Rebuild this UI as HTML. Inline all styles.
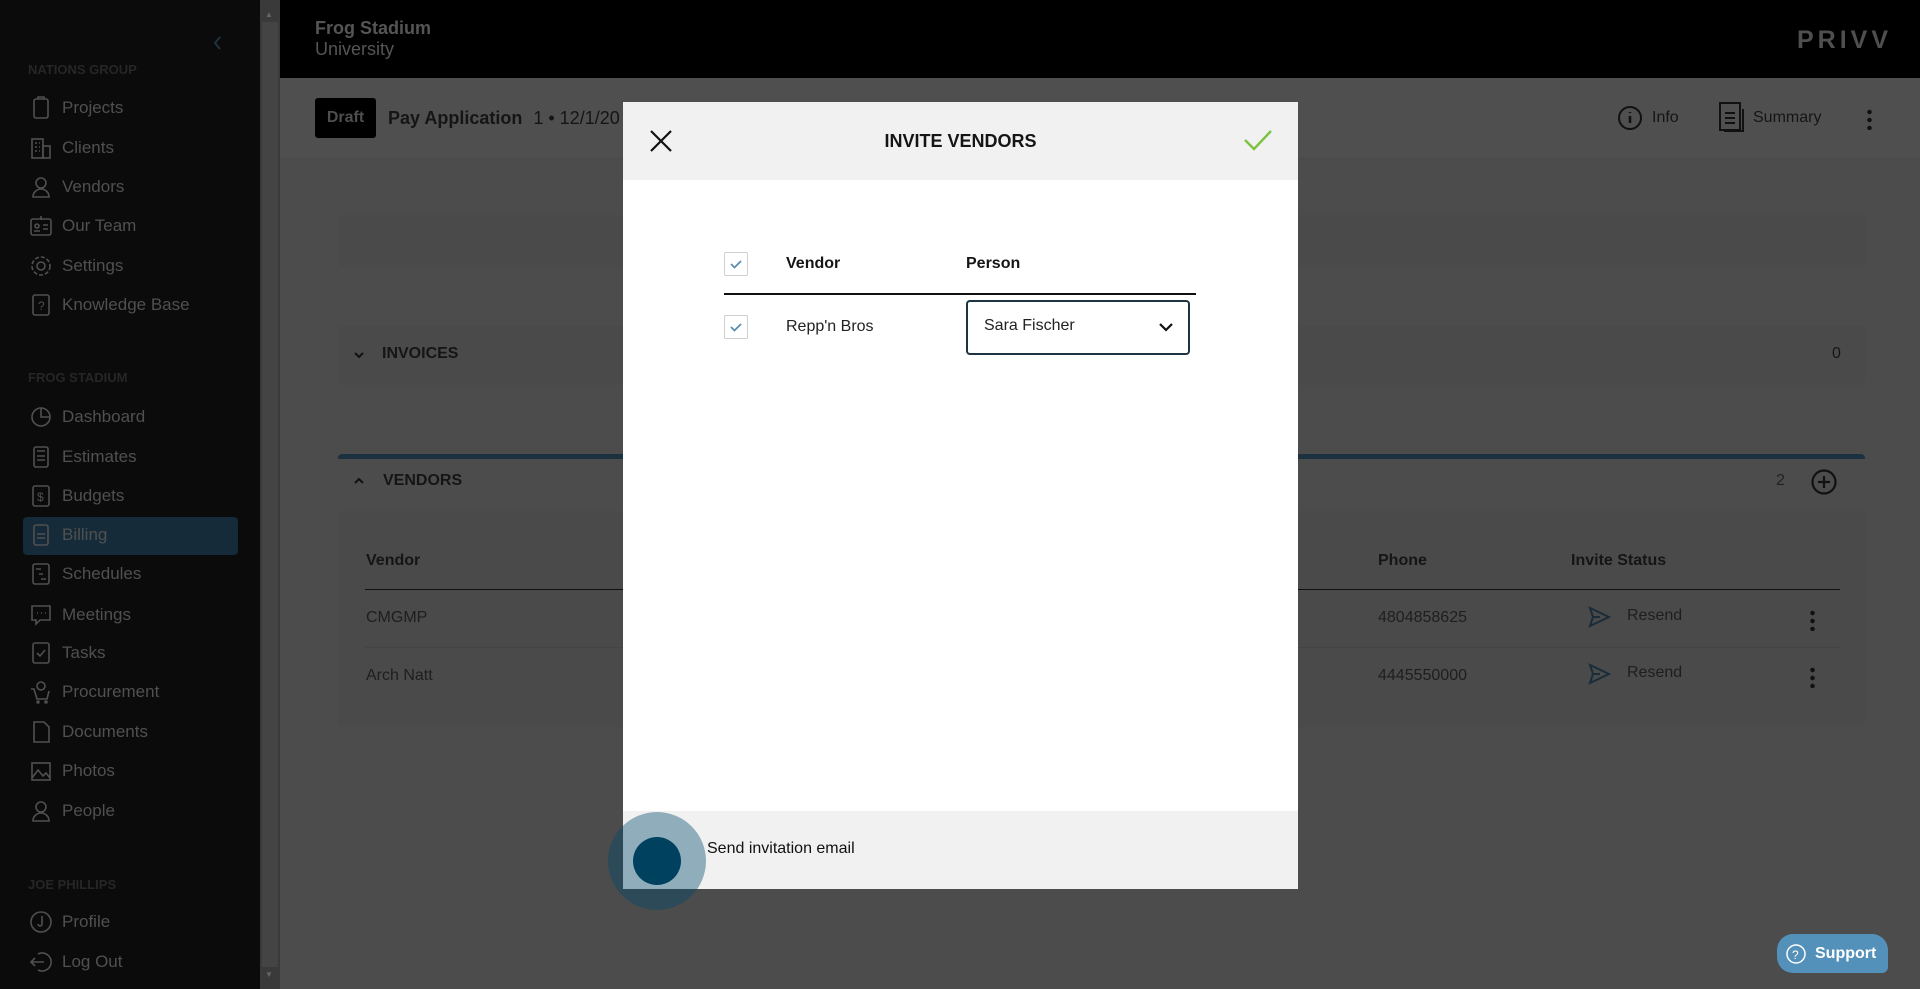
<!DOCTYPE html>
<html><head><meta charset="utf-8"><style>
*{box-sizing:border-box;margin:0;padding:0}
body{width:1920px;height:989px;overflow:hidden;position:relative;background:#4c4c4c;font-family:"Liberation Sans",sans-serif;color:#151515}
.abs{position:absolute}
#side{left:0;top:0;width:260px;height:989px;background:#0b0b0b}
#scroll{left:260px;top:0;width:20px;height:989px;background:#3a3a3a}
.sec{position:absolute;left:28px;font-size:13px;color:#262626;font-weight:bold}
.it{position:absolute;left:28px;height:30px;display:flex;align-items:center;font-size:17px;color:#505050}
.it svg{width:26px;height:26px;margin-right:8px;stroke:#505050;fill:none;stroke-width:1.6}
#top{left:280px;top:0;width:1640px;height:78px;background:#000}
#bar{left:280px;top:78px;width:1640px;height:79px;background:#4f4f4f}
.card{position:absolute;left:338px;width:1527px;background:#4a4a4a;border-radius:4px}
.txt{position:absolute;white-space:nowrap}
</style></head><body>
<div id="side" class="abs"></div>
<div id="scroll" class="abs"><div class="abs" style="left:2px;top:22px;width:16px;height:945px;background:#444"></div>
<div class="abs" style="left:5px;top:10px;font-size:8px;color:#666">▲</div><div class="abs" style="left:5px;top:970px;font-size:8px;color:#666">▼</div></div>
<svg class="abs" style="left:210px;top:34px" width="16" height="18"><path d="M10 3 L5 9 L10 15" stroke="#1e3442" stroke-width="2" fill="none"/></svg>
<div class="sec" style="top:62px">NATIONS GROUP</div>
<div class="it" style="top:93px"><svg viewBox="0 0 26 26"><rect x="6" y="4" width="14" height="19" rx="2"/><path d="M10 4v-2h6v2"/></svg>Projects</div>
<div class="it" style="top:133px"><svg viewBox="0 0 26 26"><rect x="4" y="4" width="11" height="19"/><rect x="15" y="11" width="7" height="12"/><path d="M7 8h2M11 8h1M7 12h2M11 12h1M7 16h2M11 16h1"/></svg>Clients</div>
<div class="it" style="top:172px"><svg viewBox="0 0 26 26"><circle cx="13" cy="9" r="5"/><path d="M5 23c0-5 4-8 8-8s8 3 8 8z"/></svg>Vendors</div>
<div class="it" style="top:211px"><svg viewBox="0 0 26 26"><rect x="3" y="6" width="20" height="16" rx="2"/><circle cx="9" cy="13" r="2"/><path d="M6 18h6M15 12h5M15 16h5M13 3v4"/></svg>Our Team</div>
<div class="it" style="top:251px"><svg viewBox="0 0 26 26"><circle cx="13" cy="13" r="4"/><circle cx="13" cy="13" r="9" stroke-dasharray="4 2"/></svg>Settings</div>
<div class="it" style="top:290px"><svg viewBox="0 0 26 26"><rect x="5" y="3" width="16" height="20" rx="2"/><text x="10" y="18" font-size="12" fill="#505050" stroke="none">?</text></svg>Knowledge Base</div>
<div class="sec" style="top:370px">FROG STADIUM</div>
<div class="it" style="top:402px"><svg viewBox="0 0 26 26"><circle cx="13" cy="13" r="9"/><path d="M13 4v9h9"/></svg>Dashboard</div>
<div class="it" style="top:442px"><svg viewBox="0 0 26 26"><rect x="6" y="3" width="14" height="20" rx="2"/><path d="M9 7h8M9 12h8M9 16h8"/></svg>Estimates</div>
<div class="it" style="top:481px"><svg viewBox="0 0 26 26"><rect x="5" y="3" width="16" height="20" rx="2"/><text x="9" y="18" font-size="12" fill="#505050" stroke="none">$</text></svg>Budgets</div>
<div class="abs" style="left:23px;top:517px;width:215px;height:38px;background:#152b39;border-radius:4px"></div>
<div class="it" style="top:520px"><svg viewBox="0 0 26 26"><rect x="6" y="3" width="14" height="20" rx="2"/><path d="M9 12h8M9 16h8"/></svg>Billing</div>
<div class="it" style="top:559px"><svg viewBox="0 0 26 26"><rect x="5" y="3" width="16" height="20" rx="2"/><path d="M8 8h5M11 13h4M13 18h5"/></svg>Schedules</div>
<div class="it" style="top:600px"><svg viewBox="0 0 26 26"><path d="M4 4h18v14H12l-4 4v-4H4z"/><path d="M9 11h1M13 11h1M17 11h1"/></svg>Meetings</div>
<div class="it" style="top:638px"><svg viewBox="0 0 26 26"><rect x="5" y="3" width="16" height="20" rx="2"/><path d="M9 13l3 3 5-6"/></svg>Tasks</div>
<div class="it" style="top:677px"><svg viewBox="0 0 26 26"><path d="M3 10h3l3 10h10l2-8"/><circle cx="13" cy="7" r="4"/><circle cx="10" cy="23" r="1"/><circle cx="18" cy="23" r="1"/></svg>Procurement</div>
<div class="it" style="top:717px"><svg viewBox="0 0 26 26"><path d="M6 3h10l5 5v15H6z"/></svg>Documents</div>
<div class="it" style="top:756px"><svg viewBox="0 0 26 26"><rect x="4" y="5" width="18" height="17"/><path d="M4 20l6-8 5 6 3-3 4 5"/></svg>Photos</div>
<div class="it" style="top:796px"><svg viewBox="0 0 26 26"><circle cx="13" cy="9" r="5"/><path d="M5 23c0-5 4-8 8-8s8 3 8 8z"/></svg>People</div>
<div class="sec" style="top:877px">JOE PHILLIPS</div>
<div class="it" style="top:907px"><svg viewBox="0 0 26 26"><circle cx="13" cy="13" r="10"/><path d="M14 7v8a2 2 0 0 1-4 0"/></svg>Profile</div>
<div class="it" style="top:947px"><svg viewBox="0 0 26 26"><path d="M10 5a9 9 0 1 1 0 16"/><path d="M16 13H3M7 9l-4 4 4 4"/></svg>Log Out</div>

<div id="top" class="abs"></div>
<div class="txt" style="left:315px;top:18px;font-size:18px;font-weight:bold;color:#555">Frog Stadium</div>
<div class="txt" style="left:315px;top:39px;font-size:18px;color:#555">University</div>
<div class="txt" style="left:1797px;top:26px;font-size:25px;font-weight:bold;color:#4f4f4f;letter-spacing:4px">PRIVV</div>
<div id="bar" class="abs"></div>
<div class="abs" style="left:315px;top:98px;width:61px;height:40px;background:#000;border-radius:3px;color:#4e4e4e;font-weight:bold;font-size:16px;line-height:40px;text-align:center">Draft</div>
<div class="txt" style="left:388px;top:108px;font-size:18px;font-weight:bold">Pay Application <span style="font-weight:normal;margin-left:6px">1 • 12/1/20</span></div>
<svg class="abs" style="left:1617px;top:105px" width="26" height="26"><circle cx="13" cy="13" r="11" stroke="#111" stroke-width="2" fill="none"/><path d="M13 11v7M13 7v1" stroke="#111" stroke-width="2.5"/></svg>
<div class="txt" style="left:1652px;top:109px;font-size:16px">Info</div>
<svg class="abs" style="left:1717px;top:101px" width="30" height="36"><rect x="3" y="2" width="20" height="27" stroke="#111" stroke-width="2" fill="none"/><path d="M7 30h19V8M8 12h10M8 17h10M8 22h10" stroke="#111" stroke-width="2" fill="none"/></svg>
<div class="txt" style="left:1753px;top:109px;font-size:16px">Summary</div>
<div class="abs" style="left:1867px;top:108px;width:5px;height:22px;background:radial-gradient(circle,#111 2px,transparent 2.5px) 0 0/5px 8px"></div>

<div class="card" style="top:215px;height:52px"></div>
<div class="card" style="top:326px;height:59px"></div>
<svg class="abs" style="left:352px;top:348px" width="14" height="14"><path d="M3 5l4 4 4-4" stroke="#111" stroke-width="2" fill="none"/></svg>
<div class="txt" style="left:382px;top:345px;font-size:16px;font-weight:bold">INVOICES</div>
<div class="txt" style="left:1832px;top:345px;font-size:16px">0</div>
<div class="card" style="top:454px;height:273px;border-top:5px solid #1b3140"></div>
<div class="abs" style="left:338px;top:459px;width:1527px;height:52px;background:#4c4c4c"></div>
<svg class="abs" style="left:352px;top:474px" width="14" height="14"><path d="M3 9l4-4 4 4" stroke="#111" stroke-width="2" fill="none"/></svg>
<div class="txt" style="left:383px;top:472px;font-size:16px;font-weight:bold">VENDORS</div>
<div class="txt" style="left:1776px;top:472px;font-size:16px;color:#222">2</div>
<svg class="abs" style="left:1810px;top:468px" width="28" height="28"><circle cx="14" cy="14" r="11.5" stroke="#111" stroke-width="2.2" fill="none"/><path d="M14 8v12M8 14h12" stroke="#111" stroke-width="2.2"/></svg>
<div class="txt" style="left:366px;top:552px;font-size:16px;font-weight:bold">Vendor</div>
<div class="txt" style="left:1378px;top:552px;font-size:16px;font-weight:bold">Phone</div>
<div class="txt" style="left:1571px;top:552px;font-size:16px;font-weight:bold">Invite Status</div>
<div class="abs" style="left:365px;top:589px;width:1475px;height:1px;background:#111"></div>
<div class="abs" style="left:365px;top:647px;width:1475px;height:1px;background:#444"></div>
<div class="txt" style="left:366px;top:609px;font-size:16px;color:#1e1e1e">CMGMP</div>
<div class="txt" style="left:366px;top:667px;font-size:16px;color:#1e1e1e">Arch Natt</div>
<div class="txt" style="left:1378px;top:609px;font-size:16px;color:#1e1e1e">4804858625</div>
<div class="txt" style="left:1378px;top:667px;font-size:16px;color:#1e1e1e">4445550000</div>
<svg class="abs" style="left:1587px;top:605px" width="24" height="24"><path d="M3 3l19 9-19 9 3-9z M6 12h7" stroke="#182c3a" stroke-width="2" fill="none"/></svg>
<svg class="abs" style="left:1587px;top:662px" width="24" height="24"><path d="M3 3l19 9-19 9 3-9z M6 12h7" stroke="#182c3a" stroke-width="2" fill="none"/></svg>
<div class="txt" style="left:1627px;top:607px;font-size:16px;color:#1e1e1e">Resend</div>
<div class="txt" style="left:1627px;top:664px;font-size:16px;color:#1e1e1e">Resend</div>
<div class="abs" style="left:1810px;top:609px;width:5px;height:22px;background:radial-gradient(circle,#111 2px,transparent 2.5px) 0 0/5px 8px"></div>
<div class="abs" style="left:1810px;top:666px;width:5px;height:22px;background:radial-gradient(circle,#111 2px,transparent 2.5px) 0 0/5px 8px"></div>

<div class="abs" style="left:1777px;top:934px;width:111px;height:39px;background:#5491ba;border-radius:16px 16px 6px 16px;color:#fff;font-weight:bold;font-size:16px;line-height:39px;padding-left:38px">Support</div>
<svg class="abs" style="left:1785px;top:943px" width="22" height="22"><circle cx="11" cy="11" r="9" stroke="#fff" stroke-width="1.5" fill="none"/><text x="7" y="16" font-size="12" fill="#fff" font-family="Liberation Sans">?</text></svg>

<div class="abs" style="left:623px;top:102px;width:675px;height:787px;background:#fff"></div>
<div class="abs" style="left:623px;top:102px;width:675px;height:78px;background:#f1f1f1"></div>
<div class="abs" style="left:623px;top:811px;width:675px;height:78px;background:#f1f1f1"></div>
<svg class="abs" style="left:649px;top:129px" width="24" height="24"><path d="M2 2l20 20M22 2L2 22" stroke="#111" stroke-width="2.2"/></svg>
<div class="txt" style="left:623px;width:675px;text-align:center;top:131px;font-size:18px;font-weight:bold">INVITE VENDORS</div>
<svg class="abs" style="left:1243px;top:128px" width="30" height="24"><path d="M2 12l9 9L28 3" stroke="#7cc242" stroke-width="2.4" fill="none"/></svg>
<div class="abs" style="left:724px;top:252px;width:24px;height:24px;border:1px solid #cfcfcf;border-radius:2px"></div>
<svg class="abs" style="left:728px;top:256px" width="16" height="16"><path d="M3 8l3.5 3.5L13 5" stroke="#5b8db0" stroke-width="1.8" fill="none"/></svg>
<div class="txt" style="left:786px;top:255px;font-size:16px;font-weight:bold">Vendor</div>
<div class="txt" style="left:966px;top:255px;font-size:16px;font-weight:bold">Person</div>
<div class="abs" style="left:724px;top:293px;width:472px;height:2px;background:#111"></div>
<div class="abs" style="left:724px;top:315px;width:24px;height:24px;border:1px solid #cfcfcf;border-radius:2px"></div>
<svg class="abs" style="left:728px;top:319px" width="16" height="16"><path d="M3 8l3.5 3.5L13 5" stroke="#5b8db0" stroke-width="1.8" fill="none"/></svg>
<div class="txt" style="left:786px;top:318px;font-size:16px;color:#222">Repp'n Bros</div>
<div class="abs" style="left:966px;top:300px;width:224px;height:55px;border:2px solid #1c3444;border-radius:4px"></div>
<div class="txt" style="left:984px;top:317px;font-size:16px;color:#222">Sara Fischer</div>
<svg class="abs" style="left:1157px;top:320px" width="18" height="14"><path d="M3 4l6 6 6-6" stroke="#111" stroke-width="2.2" fill="none"/></svg>
<div class="abs" style="left:608px;top:812px;width:98px;height:98px;border-radius:50%;background:rgba(0,72,108,0.4)"></div>
<div class="abs" style="left:633px;top:837px;width:48px;height:48px;border-radius:50%;background:#00415f"></div>
<div class="txt" style="left:707px;top:840px;font-size:16px;color:#111">Send invitation email</div>
</body></html>
